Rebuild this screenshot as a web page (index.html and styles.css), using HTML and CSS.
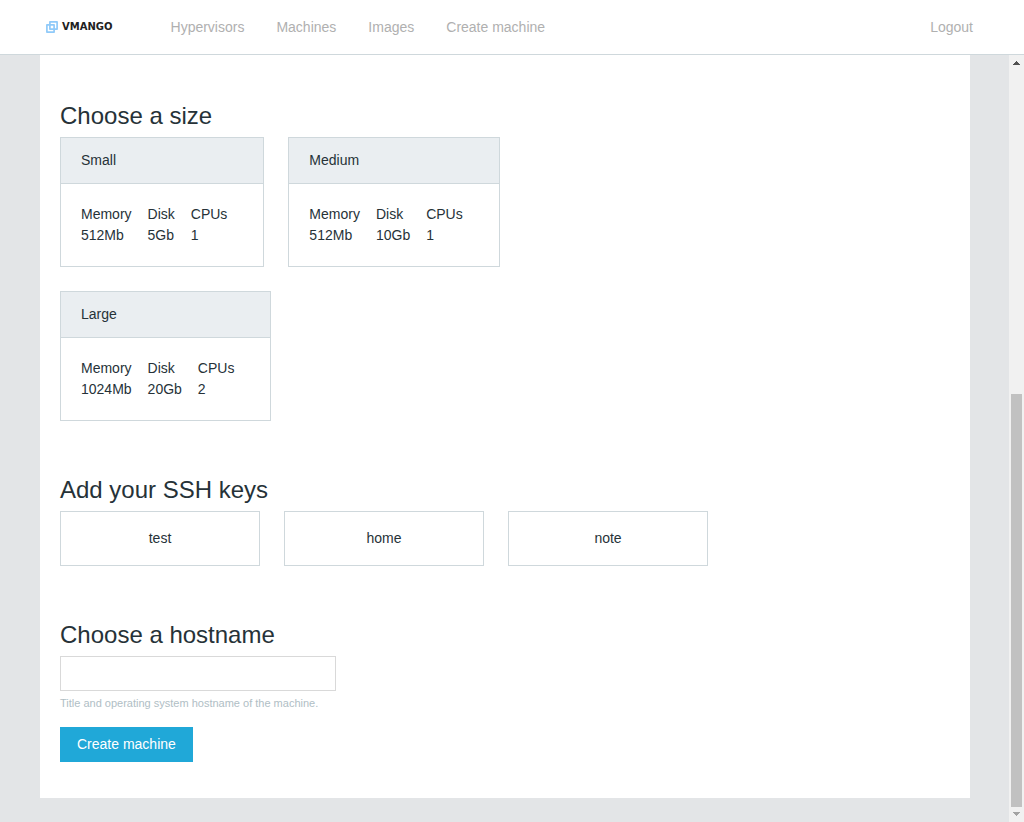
FILE: index.html
```html
<!DOCTYPE html>
<html lang="en">
<head>
<meta charset="utf-8">
<title>Create machine - Vmango</title>
<link rel="stylesheet" href="styles.css">
</head>
<body>
<header class="topbar">
  <a class="brand" href="#">
    <svg class="brand-icon" viewBox="0 0 12 12" aria-hidden="true">
      <g fill="none" stroke="#90caf9" stroke-width="1.7" stroke-linejoin="round">
        <rect x="3.9" y="0.9" width="7.2" height="7.2"/>
        <rect x="0.9" y="3.9" width="7.2" height="7.2"/>
      </g>
    </svg>
    <span>VMANGO</span>
  </a>
  <nav class="menu">
    <a href="#">Hypervisors</a>
    <a href="#">Machines</a>
    <a href="#">Images</a>
    <a href="#">Create machine</a>
  </nav>
  <a class="logout" href="#">Logout</a>
</header>
<div class="viewport">
  <main class="page">
    <form class="panel">
      <section class="section">
        <h2>Choose a size</h2>
        <div class="options">
          <article class="plan">
            <h3>Small</h3>
            <div class="plan-body">
              <table>
                <tr><th>Memory</th><th>Disk</th><th>CPUs</th></tr>
                <tr><td>512Mb</td><td>5Gb</td><td>1</td></tr>
              </table>
            </div>
          </article>
          <article class="plan">
            <h3>Medium</h3>
            <div class="plan-body">
              <table>
                <tr><th>Memory</th><th>Disk</th><th>CPUs</th></tr>
                <tr><td>512Mb</td><td>10Gb</td><td>1</td></tr>
              </table>
            </div>
          </article>
          <article class="plan">
            <h3>Large</h3>
            <div class="plan-body">
              <table>
                <tr><th>Memory</th><th>Disk</th><th>CPUs</th></tr>
                <tr><td>1024Mb</td><td>20Gb</td><td>2</td></tr>
              </table>
            </div>
          </article>
        </div>
      </section>
      <section class="section">
        <h2>Add your SSH keys</h2>
        <div class="options">
          <button class="key" type="button">test</button>
          <button class="key" type="button">home</button>
          <button class="key" type="button">note</button>
        </div>
      </section>
      <section class="section">
        <h2><label for="hostname">Choose a hostname</label></h2>
        <input class="field" id="hostname" type="text" aria-describedby="hostname-help">
        <p class="help" id="hostname-help">Title and operating system hostname of the machine.</p>
        <button class="submit" type="submit">Create machine</button>
      </section>
    </form>
  </main>
  <div class="scrollbar" aria-hidden="true">
    <svg class="arrow" viewBox="0 0 15 15"><path d="M4 10h7v-1h-1v-1h-1v-1h-1v-1h-1v1h-1v1h-1v1h-1z" fill="#505050"/></svg>
    <div class="track"><div class="thumb"></div></div>
    <svg class="arrow" viewBox="0 0 15 15"><path d="M4 5h7v1h-1v1h-1v1h-1v1h-1v-1h-1v-1h-1v-1h-1z" fill="#a3a3a3"/></svg>
  </div>
</div>
</body>
</html>
```
FILE: styles.css
```css
* {
  box-sizing: border-box;
}

body {
  margin: 0;
  min-height: 100vh;
  display: flex;
  flex-direction: column;
  background: #e3e5e7;
  color: #263238;
  font: 14px/21px "Liberation Sans", Arial, sans-serif;
}

.topbar {
  display: flex;
  align-items: center;
  height: 55px;
  padding: 0 51px 0 46px;
  background: #fff;
  border-bottom: 1px solid #cfd8dc;
}

.topbar a {
  color: #b0b0b0;
  text-decoration: none;
}

.topbar .brand {
  display: flex;
  align-items: center;
  gap: 4px;
  color: #212121;
  font: bold 10px/20px "DejaVu Sans", sans-serif;
}

.brand-icon {
  width: 12px;
  height: 12px;
}

.menu {
  display: flex;
  gap: 32px;
  margin-left: 58px;
}

.logout {
  margin-left: auto;
}

.viewport {
  display: flex;
  flex: 1;
}

.page {
  flex: 1;
  padding: 0 39px 24px 40px;
}

.panel {
  padding: 47px 20px 36px;
  background: #fff;
}

.section + .section {
  margin-top: 55px;
}

h2 {
  margin: 0 0 7px;
  font-size: 24px;
  line-height: 28px;
  font-weight: normal;
}

.options {
  display: flex;
  flex-wrap: wrap;
  gap: 24px;
  max-width: 660px;
}

.plan {
  border: 1px solid #cfd8dc;
}

.plan h3 {
  margin: 0;
  padding: 12px 20px;
  background: #eaeef1;
  border-bottom: 1px solid #cfd8dc;
  font-size: 14px;
  font-weight: normal;
}

.plan-body {
  padding: 20px;
}

.plan table {
  border-collapse: collapse;
}

.plan th,
.plan td {
  padding: 0 16px 0 0;
  font-weight: normal;
  text-align: left;
}

button,
input {
  margin: 0;
  border-radius: 0;
  color: inherit;
  font: inherit;
}

.key {
  width: 200px;
  height: 55px;
  background: #fff;
  border: 1px solid #cfd8dc;
}

.field {
  display: block;
  width: 276px;
  height: 35px;
  padding: 6px 12px;
  background: #fff;
  border: 1px solid #d9d9d9;
}

.help {
  margin: 4px 0 16px;
  color: #b0bec5;
  font-size: 11px;
  line-height: 16px;
}

.submit {
  display: block;
  height: 35px;
  padding: 0 17px;
  background: #20a8d8;
  border: 0;
  color: #fff;
}

.scrollbar {
  display: flex;
  flex-direction: column;
  width: 15px;
  background: #f1f1f1;
}

.arrow {
  display: block;
  width: 15px;
}

.track {
  display: flex;
  flex: 1;
  align-items: flex-end;
  padding: 0 2px;
}

.thumb {
  width: 100%;
  height: 56%;
  background: #c1c1c1;
}
```
